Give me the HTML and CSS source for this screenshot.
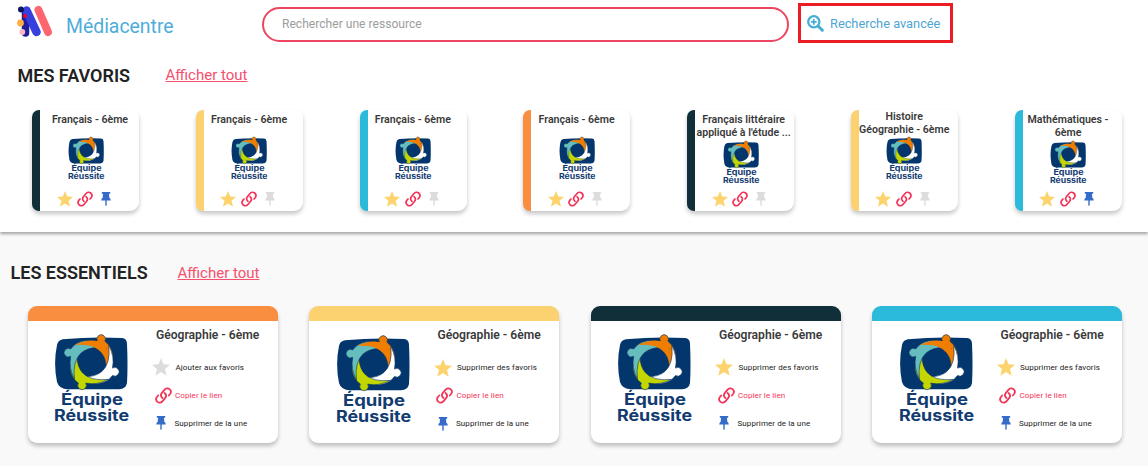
FILE: index.html
```
<!DOCTYPE html>
<html lang="fr">
<head>
<meta charset="utf-8">
<title>Médiacentre</title>
<link rel="stylesheet" href="styles.css">
</head>
<body>
<svg class="defs" aria-hidden="true">
  <defs>
    <path id="arm" stroke="#0b3468" stroke-width=".6" d="M21 12Q32 6 43.500 8.300A4.300 4.300 0 1 1 50.800 8.300Q57.500 13 59 22Q60 35 51 44C53.500 35 52 25 47 19Q39 10 21 12Z"/>
    <g id="emblem">
      <path fill="#03366c" d="M9 6.200Q38 3.500 68 5Q73 5.500 73 11Q74 32 73 50Q72 56 65 56.200H14Q5 56 3 49Q-.8 30 3 12Q4 7 9 6.200Z"/>
      <use href="#arm" fill="#ef7d00"/>
      <use href="#arm" fill="#fff" transform="rotate(90 37.600 29.200)"/>
      <use href="#arm" fill="#c3d600" transform="rotate(180 37.600 29.200)"/>
      <use href="#arm" fill="#65bebd" transform="rotate(-90 37.600 29.200)"/>
      <path fill="#ef7d00" d="M21 12Q32 6 43.500 8L51 8.300L53 20L50 23Q49 21 47 19Q39 10 21 12Z"/>
    </g>
    <symbol id="star" viewBox="0 0 18 18"><path fill="currentColor" d="M9 0l2.500 6.300 6.500.4-5 4.300 1.700 6.800L9 14.100l-5.700 3.700L5 11 0 6.700l6.500-.4z"/></symbol>
    <symbol id="link" viewBox="0 0 24 24"><g fill="none" stroke="currentColor" stroke-width="2.500" stroke-linecap="round"><path d="M10.500 15.500C8 13.500 8 10.500 9.800 8.200L13.300 4C15.300 1.500 18.300 1.200 20.500 3C22.800 5 22.900 8 21 10.300L19.500 12"/><path d="M13.500 8.500C16 10.500 16 13.500 14.200 15.800L10.700 20C8.700 22.500 5.700 22.800 3.500 21C1.200 19 1.100 16 3 13.700L4.500 12"/></g></symbol>
    <symbol id="pin" viewBox="0 0 10 14"><path fill="currentColor" d="M.8 0H9.200V1.700H8L8.300 5.700Q9.700 6.500 9.800 8.500H5.700V13.200L5 14 4.300 13.200V8.500H.2Q.3 6.500 1.700 5.700L2 1.700H.8z"/></symbol>
  </defs>
</svg>

<header class="topbar">
  <svg class="brand-mark" viewBox="0 0 36 32">
    <path d="M8.500 8V28" stroke="#1f1f9c" stroke-width="7.500" stroke-linecap="round"/>
    <path d="M9.500 5.500L19.500 27" stroke="#3540df" stroke-width="8.500" stroke-linecap="round"/>
    <path d="M21.500 5L31 27" stroke="#ff656e" stroke-width="8" stroke-linecap="round"/>
    <circle cx="4" cy="4.500" r="3" fill="#0c1561"/><circle cx="8" cy="11" r="2" fill="#f5001d"/>
    <circle cx="3.500" cy="18" r="3.400" fill="#ffae43"/><circle cx="5.300" cy="27" r="2.900" fill="#ffb9bd"/>
  </svg>
  <h1 class="brand-name">Médiacentre</h1>
  <input class="search" type="text" placeholder="Rechercher une ressource">
  <a class="advanced">
    <svg class="advanced-icon" viewBox="0 0 17 17" fill="none" stroke="#43add6"><circle cx="6.800" cy="6.800" r="5.600" stroke-width="2.300"/><path d="M11.300 11.300L15.300 15.300" stroke-width="3" stroke-linecap="round"/><path d="M6.800 3.900V9.700M3.900 6.800H9.700" stroke-width="1.700"/></svg>
    <span>Recherche avancée</span>
  </a>
</header>

<section class="favorites">
  <div class="heading"><h2>MES FAVORIS</h2><a class="show-all">Afficher tout</a></div>
  <div class="fav-grid">
    <article class="fav navy shift-wide">
      <h3>Français - 6ème</h3>
      <svg class="logo" viewBox="0 0 76 92"><use href="#emblem"/><text x="7" y="72" textLength="62" lengthAdjust="spacingAndGlyphs">Équipe</text><text x="0" y="88" textLength="75" lengthAdjust="spacingAndGlyphs">Réussite</text></svg>
      <div class="icons"><svg class="star"><use href="#star"/></svg><svg class="link"><use href="#link"/></svg><svg class="pin"><use href="#pin"/></svg></div>
    </article>
    <article class="fav yellow">
      <h3>Français - 6ème</h3>
      <svg class="logo" viewBox="0 0 76 92"><use href="#emblem"/><text x="7" y="72" textLength="62" lengthAdjust="spacingAndGlyphs">Équipe</text><text x="0" y="88" textLength="75" lengthAdjust="spacingAndGlyphs">Réussite</text></svg>
      <div class="icons"><svg class="star"><use href="#star"/></svg><svg class="link"><use href="#link"/></svg><svg class="pin off"><use href="#pin"/></svg></div>
    </article>
    <article class="fav cyan">
      <h3>Français - 6ème</h3>
      <svg class="logo" viewBox="0 0 76 92"><use href="#emblem"/><text x="7" y="72" textLength="62" lengthAdjust="spacingAndGlyphs">Équipe</text><text x="0" y="88" textLength="75" lengthAdjust="spacingAndGlyphs">Réussite</text></svg>
      <div class="icons"><svg class="star"><use href="#star"/></svg><svg class="link"><use href="#link"/></svg><svg class="pin off"><use href="#pin"/></svg></div>
    </article>
    <article class="fav orange">
      <h3>Français - 6ème</h3>
      <svg class="logo" viewBox="0 0 76 92"><use href="#emblem"/><text x="7" y="72" textLength="62" lengthAdjust="spacingAndGlyphs">Équipe</text><text x="0" y="88" textLength="75" lengthAdjust="spacingAndGlyphs">Réussite</text></svg>
      <div class="icons"><svg class="star"><use href="#star"/></svg><svg class="link"><use href="#link"/></svg><svg class="pin off"><use href="#pin"/></svg></div>
    </article>
    <article class="fav navy shift tall">
      <h3>Français littéraire<br>appliqué à l'étude ...</h3>
      <svg class="logo" viewBox="0 0 76 92"><use href="#emblem"/><text x="7" y="72" textLength="62" lengthAdjust="spacingAndGlyphs">Équipe</text><text x="0" y="88" textLength="75" lengthAdjust="spacingAndGlyphs">Réussite</text></svg>
      <div class="icons"><svg class="star"><use href="#star"/></svg><svg class="link"><use href="#link"/></svg><svg class="pin off"><use href="#pin"/></svg></div>
    </article>
    <article class="fav yellow raised">
      <h3>Histoire<br>Géographie - 6ème</h3>
      <svg class="logo" viewBox="0 0 76 92"><use href="#emblem"/><text x="7" y="72" textLength="62" lengthAdjust="spacingAndGlyphs">Équipe</text><text x="0" y="88" textLength="75" lengthAdjust="spacingAndGlyphs">Réussite</text></svg>
      <div class="icons"><svg class="star"><use href="#star"/></svg><svg class="link"><use href="#link"/></svg><svg class="pin off"><use href="#pin"/></svg></div>
    </article>
    <article class="fav cyan tall">
      <h3>Mathématiques -<br>6ème</h3>
      <svg class="logo" viewBox="0 0 76 92"><use href="#emblem"/><text x="7" y="72" textLength="62" lengthAdjust="spacingAndGlyphs">Équipe</text><text x="0" y="88" textLength="75" lengthAdjust="spacingAndGlyphs">Réussite</text></svg>
      <div class="icons"><svg class="star"><use href="#star"/></svg><svg class="link"><use href="#link"/></svg><svg class="pin"><use href="#pin"/></svg></div>
    </article>
  </div>
</section>

<section class="essentials">
  <div class="heading"><h2>LES ESSENTIELS</h2><a class="show-all">Afficher tout</a></div>
  <div class="ess-grid">
    <article class="ess orange">
      <svg class="logo" viewBox="0 0 76 92"><use href="#emblem"/><text x="7" y="72" textLength="62" lengthAdjust="spacingAndGlyphs">Équipe</text><text x="0" y="88" textLength="75" lengthAdjust="spacingAndGlyphs">Réussite</text></svg>
      <div class="details">
        <h3>Géographie - 6ème</h3>
        <div class="action"><svg class="star off"><use href="#star"/></svg><span class="fav-label">Ajouter aux favoris</span></div>
        <div class="action copy"><svg class="link"><use href="#link"/></svg><span>Copier le lien</span></div>
        <div class="action unpin"><svg class="pin"><use href="#pin"/></svg><span>Supprimer de la une</span></div>
      </div>
    </article>
    <article class="ess yellow lower">
      <svg class="logo" viewBox="0 0 76 92"><use href="#emblem"/><text x="7" y="72" textLength="62" lengthAdjust="spacingAndGlyphs">Équipe</text><text x="0" y="88" textLength="75" lengthAdjust="spacingAndGlyphs">Réussite</text></svg>
      <div class="details">
        <h3>Géographie - 6ème</h3>
        <div class="action"><svg class="star"><use href="#star"/></svg><span class="fav-label">Supprimer des favoris</span></div>
        <div class="action copy"><svg class="link"><use href="#link"/></svg><span>Copier le lien</span></div>
        <div class="action unpin"><svg class="pin"><use href="#pin"/></svg><span>Supprimer de la une</span></div>
      </div>
    </article>
    <article class="ess navy">
      <svg class="logo" viewBox="0 0 76 92"><use href="#emblem"/><text x="7" y="72" textLength="62" lengthAdjust="spacingAndGlyphs">Équipe</text><text x="0" y="88" textLength="75" lengthAdjust="spacingAndGlyphs">Réussite</text></svg>
      <div class="details">
        <h3>Géographie - 6ème</h3>
        <div class="action"><svg class="star"><use href="#star"/></svg><span class="fav-label">Supprimer des favoris</span></div>
        <div class="action copy"><svg class="link"><use href="#link"/></svg><span>Copier le lien</span></div>
        <div class="action unpin"><svg class="pin"><use href="#pin"/></svg><span>Supprimer de la une</span></div>
      </div>
    </article>
    <article class="ess cyan">
      <svg class="logo" viewBox="0 0 76 92"><use href="#emblem"/><text x="7" y="72" textLength="62" lengthAdjust="spacingAndGlyphs">Équipe</text><text x="0" y="88" textLength="75" lengthAdjust="spacingAndGlyphs">Réussite</text></svg>
      <div class="details">
        <h3>Géographie - 6ème</h3>
        <div class="action"><svg class="star"><use href="#star"/></svg><span class="fav-label">Supprimer des favoris</span></div>
        <div class="action copy"><svg class="link"><use href="#link"/></svg><span>Copier le lien</span></div>
        <div class="action unpin"><svg class="pin"><use href="#pin"/></svg><span>Supprimer de la une</span></div>
      </div>
    </article>
  </div>
</section>
</body>
</html>
```
FILE: styles.css
```
* { box-sizing: border-box; }
body { margin: 0; height: 466px; overflow: hidden; background: #f9f9f9; font-family: Roboto, "Liberation Sans", sans-serif; color: #222; }
h1, h2, h3 { margin: 0; }
svg { display: block; flex: none; }
.defs { display: none; }

.topbar { position: relative; z-index: 1; display: flex; align-items: flex-start; height: 50px; padding-left: 17px; background: #fff; }
.brand-mark { width: 36px; height: 32px; margin-top: 5px; fill: none; }
.brand-name { width: 196px; margin: 15px 0 0 13px; font-size: 19.400px; line-height: 24px; font-weight: 400; color: #4fadd9; }
.search { width: 527px; height: 35px; margin: 7px 1px 0 0; padding: 0 18px 1px; border: 2px solid #ee4563; border-radius: 18px; background: #fff; font: 12.100px/16px Roboto, sans-serif; outline: 0; }
.search::placeholder { color: #9d9d9d; opacity: 1; }
.advanced { display: flex; align-items: center; gap: 6px; width: 155px; height: 40px; margin: 3px 0 0 8px; padding-left: 6px; border: 3px solid #ec1c24; font-size: 12.800px; color: #4fa5d3; white-space: nowrap; }
.advanced-icon { width: 17px; height: 17px; }

.heading { display: flex; align-items: center; height: 24px; }
.heading h2 { width: 148px; font-size: 18px; font-weight: 600; line-height: 24px; white-space: nowrap; }
.show-all { font-size: 15px; font-weight: 400; line-height: 20px; color: #f5506e; text-decoration: underline; text-decoration-thickness: 1px; }
.favorites .show-all { margin: -2px 0 0 0; }

.navy { --accent: #102f38; }
.yellow { --accent: #fcd270; }
.cyan { --accent: #2bbad9; }
.orange { --accent: #f98e40; }
.star { color: #fdd36d; }
.link { color: #f43358; }
.pin { color: #356cc7; }
.star.off, .pin.off { color: #dcdcdc; }

.favorites { position: relative; height: 182px; padding-top: 14px; background: #fff; box-shadow: 0 2px 3px rgba(0,0,0,.35); }
.favorites .heading { padding-left: 17.500px; }
.fav-grid { display: grid; grid-template-columns: repeat(7, 107px); column-gap: 56.800px; margin: 21.500px 0 0 32px; }
.fav { height: 101.500px; border-left: 8.500px solid var(--accent); border-radius: 7px; border-bottom-right-radius: 9px; background: #fff; box-shadow: 0 3px 4px rgba(0,0,0,.22); }
.fav h3 { height: 26.500px; padding-top: 3px; margin-left: -8.500px; font-size: 10.600px; line-height: 13px; font-weight: 600; text-align: center; white-space: nowrap; color: #3a3a3a; }
.fav.shift-wide h3 { margin-left: 1px; }
.fav.shift h3 { margin-left: -2px; }
.fav.tall h3 { height: 30.500px; }
.fav.raised h3 { padding-top: 0; }
.fav .logo { width: 37px; height: 45px; margin-left: 27.500px; }
.logo text { font-family: Inter, sans-serif; font-size: 15.400px; font-weight: 700; fill: #123b70; }
.icons { display: flex; align-items: center; height: 18px; margin: 8.500px 0 0 16.500px; }
.fav.tall .icons { margin-top: 4.500px; }
.icons .star { width: 16px; height: 16px; }
.icons .link { width: 16px; height: 16px; margin-left: 4.500px; }
.icons .pin { width: 10px; height: 14px; margin-left: 8px; }

.essentials { padding-top: 29px; }
.essentials .heading { padding-left: 10.500px; }
.essentials .heading h2 { width: 167px; }
.ess-grid { display: grid; grid-template-columns: repeat(4, 250px); column-gap: 31.500px; margin: 20.500px 0 0 27.500px; }
.ess { display: flex; align-items: flex-start; height: 137.500px; border-top: 15px solid var(--accent); border-radius: 9px; background: #fff; box-shadow: 0 3px 4px rgba(0,0,0,.24); }
.ess.lower { margin-top: .7px; height: 137px; }
.ess .logo { width: 76px; height: 92px; margin: 12.500px 0 0 26.500px; }
.details { width: 121px; margin-left: 22px; padding-top: 7px; }
.details h3 { height: 25.500px; padding-left: 4px; font-size: 12.100px; line-height: 15px; font-weight: 600; white-space: nowrap; color: #3a3a3a; }
.action { display: flex; align-items: center; height: 28px; font-size: 8px; letter-spacing: .1px; white-space: nowrap; }
.action .star { width: 18px; height: 18px; margin-right: 5.500px; }
.copy { padding-left: 2.500px; color: #f43358; }
.action .link { width: 17px; height: 17px; margin-right: 3.500px; }
.unpin { padding-left: 4px; }
.action .pin { width: 10px; height: 14px; margin-right: 8.500px; }
```
